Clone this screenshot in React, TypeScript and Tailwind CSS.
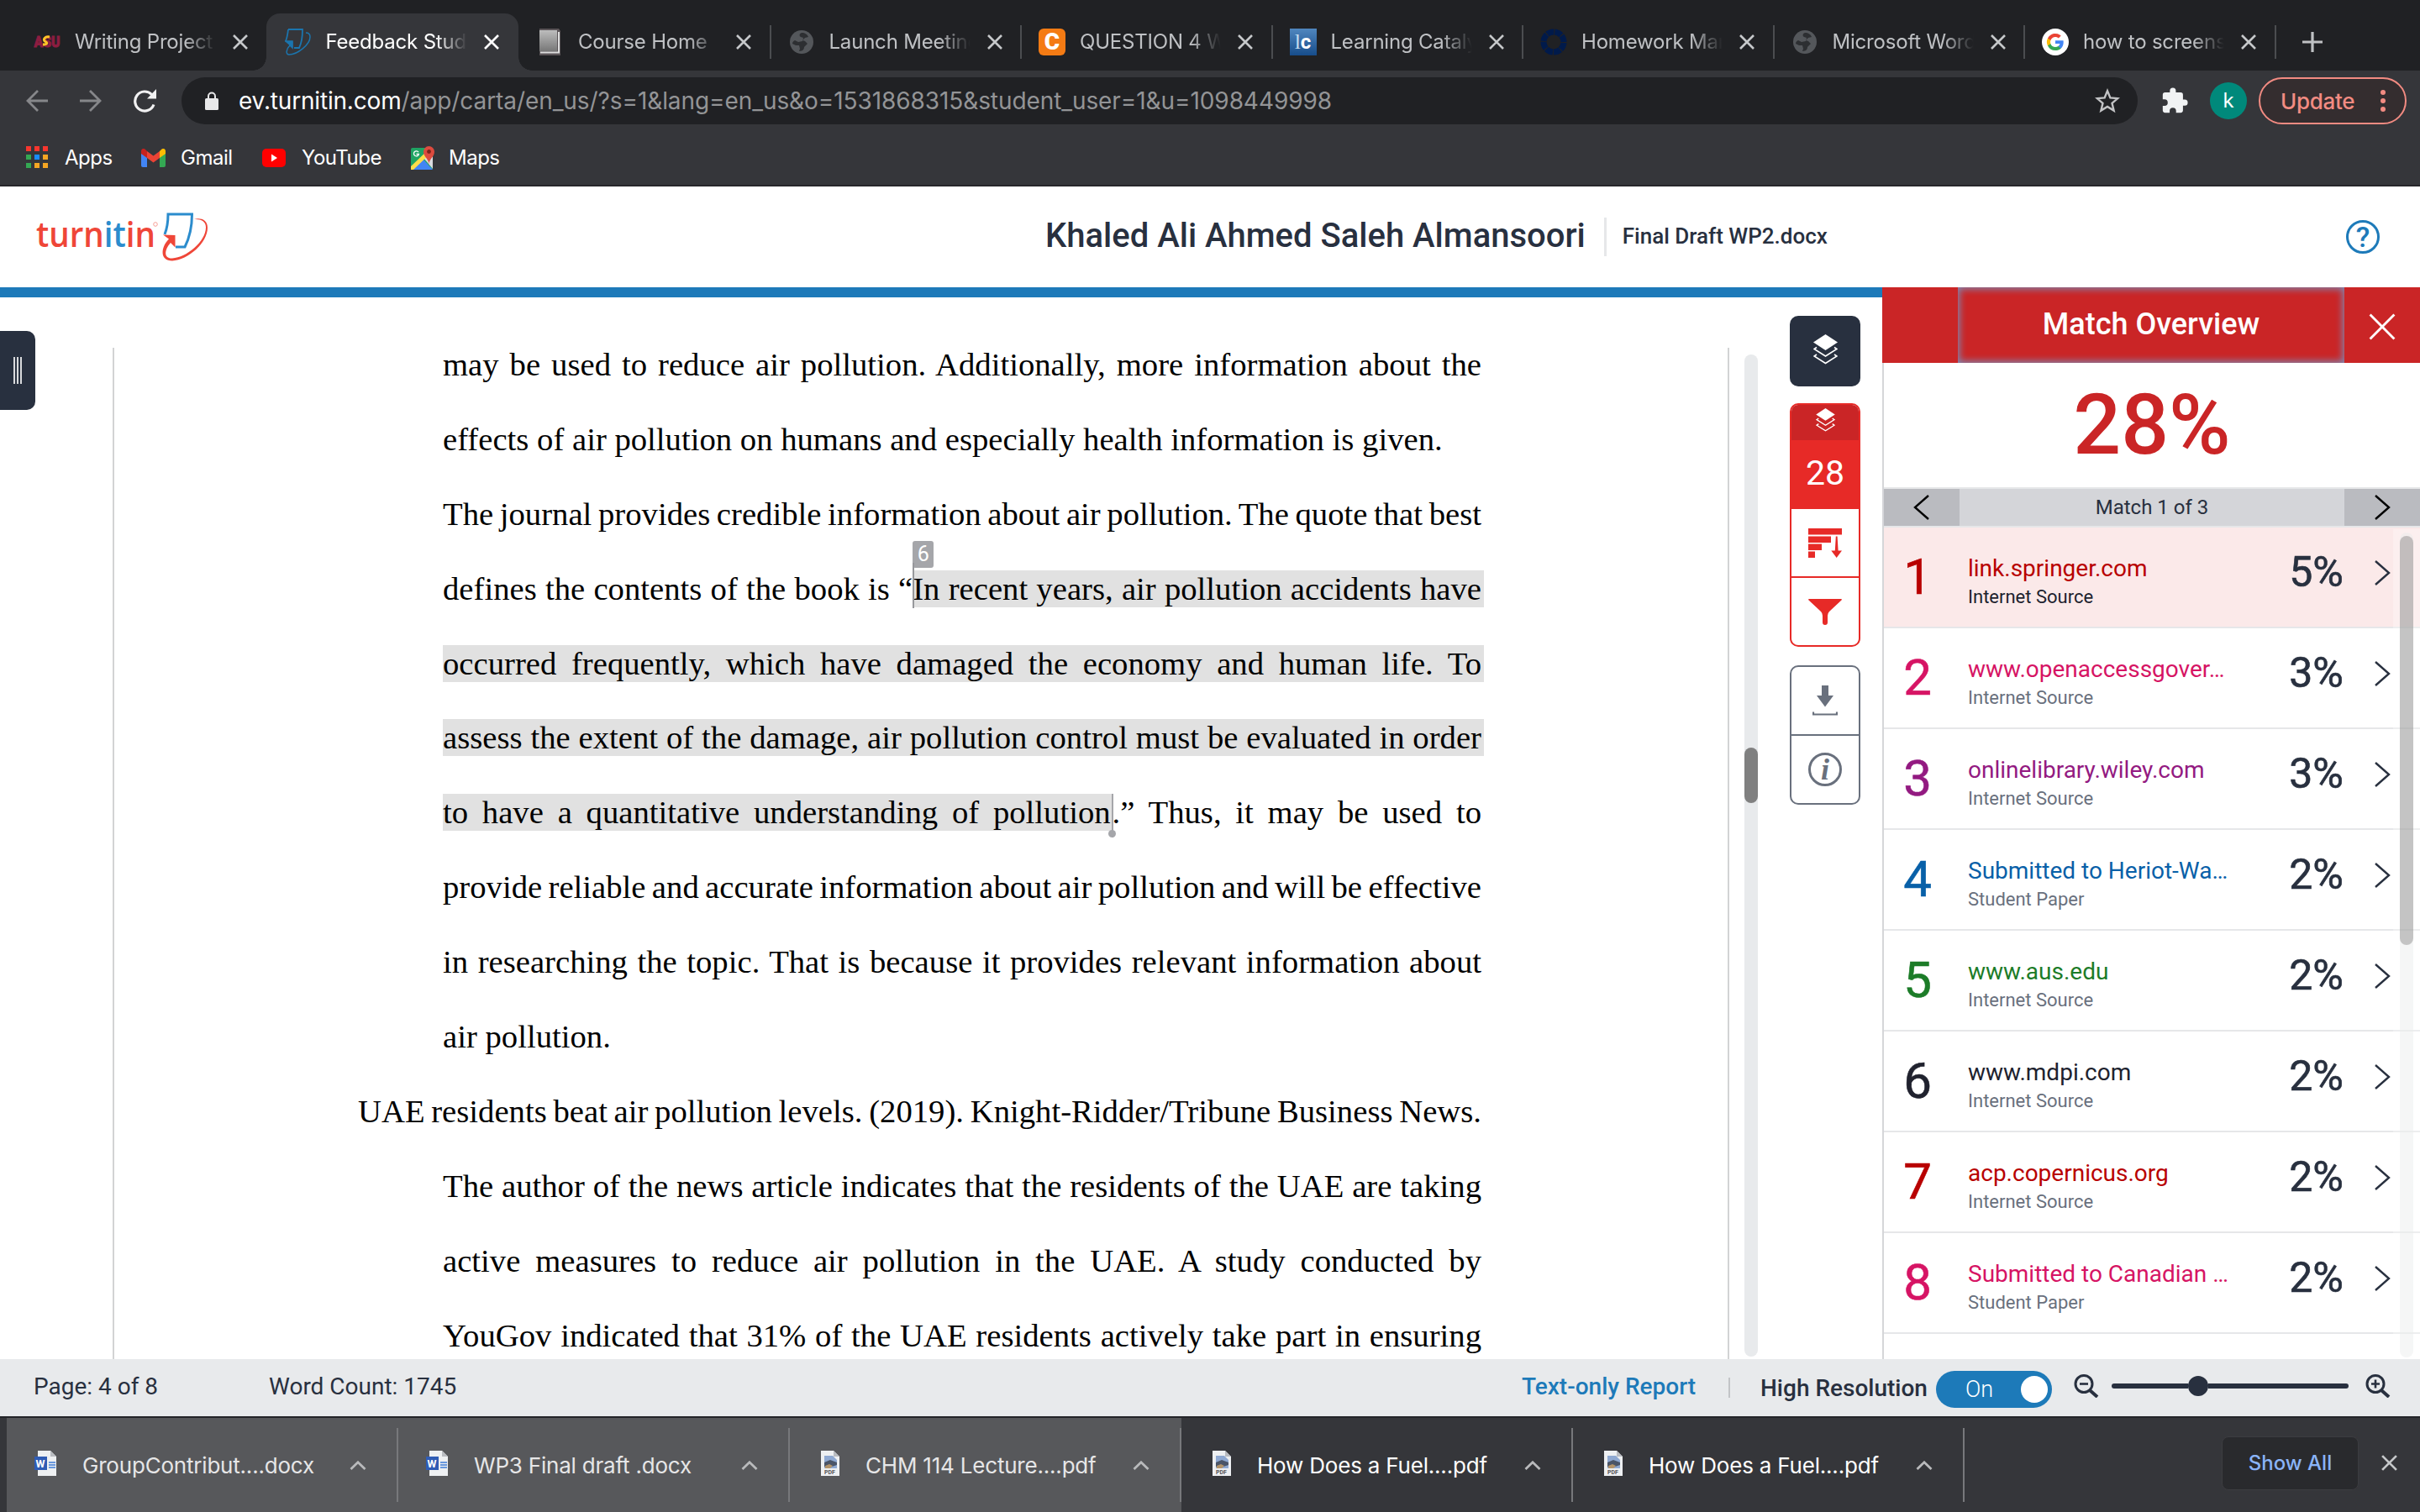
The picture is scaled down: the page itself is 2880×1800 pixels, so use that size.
import type { ReactNode } from "react";
import clsx from "clsx";

type TabItem = { title: string; icon: ReactNode; active?: boolean };

function Globe() {
  return (
    <svg viewBox="0 0 28 28" className="mx-0.5 size-7">
      <circle cx="14" cy="14" r="14" fill="#54575b" />
      <path
        d="M14 3c-3 1-3 4-1 5l3 1-1 4-5 1-4-2c-2 1-3 2-3 4l4 2 4 0 1 4-1 3c5 0 6-3 6-5l4-4-3-3-3-1 3-3 4-1c-1-3-4-5-8-5z"
        fill="#2d2f32"
      />
    </svg>
  );
}

function GoogleG() {
  return (
    <svg viewBox="0 0 32 32" className="size-8">
      <circle cx="16" cy="16" r="16" fill="#fff" />
      <g transform="translate(5 5) scale(.917)">
        <path fill="#4285F4" d="M22.56 12.25c0-.78-.07-1.53-.2-2.25H12v4.26h5.92a5.06 5.06 0 0 1-2.2 3.32v2.77h3.57c2.08-1.92 3.27-4.74 3.27-8.1z" />
        <path fill="#34A853" d="M12 23c2.97 0 5.46-.98 7.28-2.66l-3.57-2.77c-.98.66-2.23 1.06-3.71 1.06-2.86 0-5.29-1.93-6.16-4.53H2.18v2.84A11 11 0 0 0 12 23z" />
        <path fill="#FBBC05" d="M5.84 14.09a6.6 6.6 0 0 1 0-4.18V7.07H2.18a11 11 0 0 0 0 9.86l3.66-2.84z" />
        <path fill="#EA4335" d="M12 5.38c1.62 0 3.06.56 4.21 1.64l3.15-3.15A11 11 0 0 0 2.18 7.07l3.66 2.84C6.71 7.3 9.14 5.38 12 5.38z" />
      </g>
    </svg>
  );
}

const tabs: TabItem[] = [
  {
    title: "Writing Project 2",
    icon: (
      <svg viewBox="0 0 32 32" className="size-8">
        <text x="0.5" y="22" fontSize="19" fontWeight="900" fontFamily="Roboto" fill="#8c1d40" stroke="#8c1d40" strokeWidth="1" textLength="31" lengthAdjust="spacingAndGlyphs">
          ASU
        </text>
        <path d="M19 10c-5-1-9 3-5 5.500 3 1.500 2 3.500-3 3.500" fill="none" stroke="#ffc627" strokeWidth="3" />
      </svg>
    ),
  },
  {
    title: "Feedback Studio",
    active: true,
    icon: (
      <svg viewBox="0 0 32 32" className="size-8" fill="none" stroke="#1b75ae">
        <path d="M4 1h17q0 14-4 22h-6M4 1q-1 9-3 14" strokeWidth="1.800" />
        <path d="M0 15h9v8l-3-3C1 25 1 31 5 31c10 0 25-12 25-21 0-4-2-5-5-5" strokeWidth="1.500" />
        <path d="M1 15.500h8v7z" fill="#1b75ae" />
      </svg>
    ),
  },
  {
    title: "Course Home",
    icon: (
      <svg viewBox="0 0 32 32" className="size-8">
        <defs>
          <linearGradient id="book" x2="0" y2="1">
            <stop stopColor="#bdbdbd" />
            <stop offset="1" stopColor="#777" />
          </linearGradient>
        </defs>
        <path d="M3 0h23l2 3v29H3z" fill="#5b5558" />
        <path d="M3 2h21v25H3z" fill="url(#book)" />
        <path d="M4 28.500h22V4" fill="none" stroke="#ddd" strokeWidth="2" />
      </svg>
    ),
  },
  { title: "Launch Meeting - Zoom", icon: <Globe /> },
  {
    title: "QUESTION 4 WP",
    icon: (
      <div className="flex size-8 items-center justify-center rounded-md bg-[#f47b14] font-[Roboto] text-[28px] leading-none font-black text-white">C</div>
    ),
  },
  {
    title: "Learning Catalytics",
    icon: (
      <div className="flex size-8 items-center justify-center bg-linear-to-b from-[#5087bf] to-[#164d8b] font-['Liberation_Serif'] text-[26px] leading-none text-[#c5dcf0]">
        l<b className="font-[Roboto] text-[24px] text-white">c</b>
      </div>
    ),
  },
  {
    title: "Homework Manager",
    icon: (
      <svg viewBox="0 0 32 32" className="size-8" fill="none" stroke="#001a4b">
        <circle cx="16" cy="16" r="12" strokeWidth="7" />
        <circle cx="16" cy="16" r="12" strokeWidth="8" stroke="#202124" strokeDasharray="1 8.425" />
      </svg>
    ),
  },
  { title: "Microsoft Word - Final", icon: <Globe /> },
  { title: "how to screenshot on", icon: <GoogleG /> },
];

const matches = [
  { name: "link.springer.com", kind: "Internet Source", percent: "5%", color: "text-[#b80000]" },
  { name: "www.openaccessgover…", kind: "Internet Source", percent: "3%", color: "text-[#d61464]" },
  { name: "onlinelibrary.wiley.com", kind: "Internet Source", percent: "3%", color: "text-[#931a81]" },
  { name: "Submitted to Heriot-Wa…", kind: "Student Paper", percent: "2%", color: "text-[#0860a8]" },
  { name: "www.aus.edu", kind: "Internet Source", percent: "2%", color: "text-[#1c7c28]" },
  { name: "www.mdpi.com", kind: "Internet Source", percent: "2%", color: "text-[#20222e]" },
  { name: "acp.copernicus.org", kind: "Internet Source", percent: "2%", color: "text-[#b80000]" },
  { name: "Submitted to Canadian …", kind: "Student Paper", percent: "2%", color: "text-[#d61464]" },
];

const downloads = [
  { name: "GroupContribut....docx", type: "word", dim: true },
  { name: "WP3 Final draft .docx", type: "word", dim: true },
  { name: "CHM 114 Lecture....pdf", type: "pdf", dim: true },
  { name: "How Does a Fuel....pdf", type: "pdf", dim: false },
  { name: "How Does a Fuel....pdf", type: "pdf", dim: false },
];

function Cross({ className }: { className: string }) {
  return (
    <svg viewBox="0 0 20 20" className={className} fill="none" stroke="currentColor">
      <path d="M2 2l16 16M18 2L2 18" />
    </svg>
  );
}

function Chevron({ className, left }: { className?: string; left?: boolean }) {
  return (
    <svg viewBox="0 0 20 32" className={clsx("h-8 w-5 shrink-0", className)} fill="none" stroke="currentColor" strokeWidth="2.400">
      <path d={left ? "M18 2L2 16l16 14" : "M2 2l16 14L2 30"} />
    </svg>
  );
}

function Tab({ title, icon, active, separator }: TabItem & { separator: boolean }) {
  return (
    <div className={clsx("relative flex h-[68px] w-[298.5px] shrink-0 items-center pl-[20px]", active && "mr-0.5")}>
      {active && (
        <div className="absolute inset-y-0 right-0 -left-[2px] rounded-t-2xl bg-[#35363a]">
          <div className="absolute bottom-0 -left-4 size-4 bg-[radial-gradient(circle_at_0_0,#202124_15.5px,#35363a_16px)]" />
          <div className="absolute -right-4 bottom-0 size-4 bg-[radial-gradient(circle_at_100%_0,#202124_15.5px,#35363a_16px)]" />
        </div>
      )}
      <div className="relative size-8 shrink-0">
        <div className="flex size-8 items-center">{icon}</div>
      </div>
      <div
        className={clsx(
          "relative ml-[17px] w-[168px] overflow-hidden mask-[linear-gradient(to_right,#000_78%,transparent)] text-[24px] tracking-[-0.2px] whitespace-nowrap",
          active ? "text-white" : "text-[#bfc1c4]",
        )}
      >
        {title}
      </div>
      <Cross className={clsx("relative ml-[19px] size-5 shrink-0 stroke-[2.6]", active ? "text-white" : "text-[#c6c8ca]")} />
      {separator && <div className="ml-auto h-10 w-0.5 bg-[#4b4d50]" />}
    </div>
  );
}

function Browser() {
  return (
    <div className="h-[222px] border-b-2 border-[#27262a] bg-[#35363a] font-[Inter,sans-serif]">
      <div className="flex h-[84px] bg-[#202124] pt-4 pl-5">
        {tabs.map((tab, i) => (
          <Tab key={tab.title} {...tab} separator={i > 1} />
        ))}
        <svg viewBox="0 0 24 24" className="mt-[22px] ml-[31px] size-6" stroke="#bfc1c4" strokeWidth="3.200">
          <path d="M12 0v24M0 12h24" />
        </svg>
      </div>

      <div className="flex h-[72px] items-center pl-[31px]">
        <svg viewBox="0 0 26 26" className="h-[26px] w-[26px]" fill="none" stroke="#86878a" strokeWidth="2.800">
          <path d="M14 1L2 13l12 12M2 13h24" />
        </svg>
        <svg viewBox="0 0 26 26" className="ml-[38px] h-[26px] w-[26px]" fill="none" stroke="#86878a" strokeWidth="2.800">
          <path d="M12 1l12 12-12 12M24 13H0" />
        </svg>
        <svg viewBox="0 0 28 28" className="ml-[37px] size-7" fill="none">
          <path d="M22.500 6.500a11.500 11.500 0 1 0 2.500 12" stroke="#f1f1f2" strokeWidth="3.200" />
          <path d="M28 0v11.500H17z" fill="#f1f1f2" />
        </svg>
        <div className="ml-[30px] flex h-14 w-[2328px] items-center rounded-full bg-[#202124] pl-[28px] text-[28px]">
          <svg viewBox="0 0 16 22" className="h-[22px] w-4" fill="none">
            <rect y="8" width="16" height="14" rx="1.500" fill="#e8e8e9" />
            <path d="M4 9V5.500a4 4 0 0 1 8 0V9" stroke="#e8e8e9" strokeWidth="2" />
          </svg>
          <div className="ml-[24px] whitespace-nowrap">
            <span className="tracking-[-0.18px] text-white">ev.turnitin.com</span>
            <span className="tracking-[-0.08px] text-[#939496]">
              /app/carta/en_us/?s=1&amp;lang=en_us&amp;o=1531868315&amp;student_user=1&amp;u=1098449998
            </span>
          </div>
          <svg viewBox="0 0 24 24" className="mr-[21px] ml-auto size-[30px]" fill="none" stroke="#c3c4c6" strokeWidth="1.900">
            <path d="M12 2.500l2.700 6.600 7.100.6-5.400 4.600 1.700 7L12 17.500l-6.100 3.800 1.700-7-5.400-4.600 7.100-.6z" />
          </svg>
        </div>
        <svg viewBox="0 0 24 24" className="ml-[27px] size-[34px] fill-[#f1f3f4]">
          <path d="M20.500 11H19V7a2 2 0 0 0-2-2h-4V3.500a2.500 2.500 0 0 0-5 0V5H4a2 2 0 0 0-2 2v3.800h1.500a2.700 2.700 0 0 1 0 5.400H2V20a2 2 0 0 0 2 2h3.800v-1.500a2.700 2.700 0 0 1 5.400 0V22H17a2 2 0 0 0 2-2v-4h1.500a2.500 2.500 0 0 0 0-5z" />
        </svg>
        <div className="ml-[25px] flex size-11 items-center justify-center rounded-full bg-[#00897b] text-[24px] text-white">k</div>
        <div className="ml-[14px] flex h-14 w-[176px] items-center rounded-full border-2 border-[#f28b82] bg-[#342d2f] pl-[24px] text-[26px] font-medium tracking-[-0.3px] text-[#f28b82]">
          Update
          <div className="ml-[31px] flex flex-col gap-1">
            <i className="size-1.5 rounded-full bg-[#f28b82]" />
            <i className="size-1.5 rounded-full bg-[#f28b82]" />
            <i className="size-1.5 rounded-full bg-[#f28b82]" />
          </div>
        </div>
      </div>

      <div className="flex h-[63px] items-center pl-[31px] text-[24px] tracking-[-0.5px] text-white">
        <div className="flex w-[137px] items-center gap-5">
          <svg viewBox="0 0 26 27" className="h-[27px] w-[26px]">
            <path d="M0 0h6v6H0zM10 0h6v6h-6zM20 0h6v6h-6z" fill="#f7362e" />
            <path d="M0 10h6v6H0zM0 20h6v6H0z" fill="#34a853" />
            <path d="M10 10h6v6h-6z" fill="#1a8cff" />
            <path d="M20 10h6v6h-6zM10 20h6v6h-6zM20 20h6v6h-6z" fill="#f5a623" />
          </svg>
          Apps
        </div>
        <div className="flex w-[144px] items-center gap-[18px]">
          <svg viewBox="0 0 29 22" className="h-[22px] w-[29px]">
            <path d="M0 5v15a2 2 0 0 0 2 2h5V9z" fill="#4285f4" />
            <path d="M29 5v15a2 2 0 0 1-2 2h-5V9z" fill="#34a853" />
            <path d="M22 3v8l7-5V3c0-3-3-4-5-2z" fill="#fbbc04" />
            <path d="M0 6l7 5V3L5 1C3-1 0 0 0 3z" fill="#c5221f" />
            <path d="M7 3l7.500 5.500L22 3v8l-7.500 5.500L7 11z" fill="#ea4335" />
          </svg>
          Gmail
        </div>
        <div className="flex w-[177px] items-center gap-[19px]">
          <svg viewBox="0 0 28 22" className="h-[22px] w-7">
            <rect width="28" height="22" rx="5" fill="#f00" />
            <path d="M11 6.500v9l7-4.500z" fill="#fff" />
          </svg>
          YouTube
        </div>
        <div className="flex items-center gap-[17px]">
          <svg viewBox="0 0 28 28" className="size-7">
            <rect y="2" width="26" height="26" rx="2" fill="#1fa463" />
            <path d="M2 28L14 15l12 13z" fill="#4285f4" />
            <path d="M15 14l11-6v19z" fill="#dadce0" />
            <path d="M0 24L20 5l4 3L3 28H0z" fill="#ffdd4b" />
            <path d="M21.500 22c0-7-6.500-9-6.500-15.500a6.500 6.500 0 0 1 13 0C28 13 21.500 15 21.500 22z" fill="#dd4b3e" />
            <circle cx="21.500" cy="6.500" r="2.400" fill="#7c231b" />
            <path d="M9 7.200a3 3 0 1 0 .4 2.300H6.500" fill="none" stroke="#fff" strokeWidth="1.300" />
          </svg>
          Maps
        </div>
      </div>
    </div>
  );
}

function TurnitinLogo() {
  return (
    <svg viewBox="0 0 206 62" className="h-[62px] w-[206px]">
      <text x="0" y="43" fontFamily="Open Sans" fontSize="42" fontWeight="600" fill="#ef4638" textLength="142" lengthAdjust="spacingAndGlyphs">
        turn<tspan fill="#2b8ccd">it</tspan>in
      </text>
      <circle cx="142" cy="16" r="2.300" fill="none" stroke="#f4897f" strokeWidth=".8" />
      <g fill="none">
        <path d="M153 28q4-10 4-24h28.500q0 22-8.500 39h-11" stroke="#2b8ccd" strokeWidth="3" />
        <path
          d="M151 28.500l14.500.5v14.500l-5.500-5.500c-8 9-8 19 2 18.500 17-1 40-20 40-37 0-7-6-10-14-9.500 7-2 16 0 16 10 0 18-23 38.500-42 39.500-15 0-14-16-4-26z"
          fill="#ef4638"
        />
      </g>
    </svg>
  );
}

function Header() {
  return (
    <header className="flex h-[120px] items-center bg-white pl-[43px] text-[#28303f]">
      <TurnitinLogo />
      <h1 className="ml-[995px] pb-[3px] text-[40px] font-medium whitespace-nowrap">Khaled Ali Ahmed Saleh Almansoori</h1>
      <div className="ml-[22px] h-[46px] w-[3px] bg-[#e6e7e9]" />
      <div className="ml-[19px] pb-0.5 text-[26px] font-medium whitespace-nowrap">Final Draft WP2.docx</div>
      <div className="mr-12 ml-auto flex size-10 items-center justify-center rounded-full border-[3px] border-[#1d7ab9] text-[34px] font-medium text-[#1d7ab9]">
        ?
      </div>
    </header>
  );
}

const mark = "bg-[#e1e1e1] py-px";

type LineProps = { children: ReactNode; ragged?: boolean; hanging?: boolean; tight?: boolean };

function Line({ children, ragged, hanging, tight }: LineProps) {
  return (
    <div
      className={clsx(
        "h-[88.9px] leading-[88.9px] whitespace-nowrap",
        !ragged && "[text-align-last:justify]",
        hanging && "-ml-[101px]",
        tight && "[word-spacing:-3px]",
      )}
    >
      {children}
    </div>
  );
}

function Paper() {
  return (
    <div className="mt-[60px] w-[1924px] border-x-2 border-[#d2d3d4]">
      <article className="-mt-[24px] ml-[391px] w-[1236px] font-['Liberation_Serif',serif] text-[38.7px] text-black">
        <Line>may be used to reduce air pollution. Additionally, more information about the</Line>
        <Line ragged>effects of air pollution on humans and especially health information is given.</Line>
        <Line tight>The journal provides credible information about air pollution. The quote that best</Line>
        <Line>
          defines the contents of the book is “
          <span className={clsx(mark, "relative -mr-[3px] pr-[3px]")}>
            <span className="absolute -top-[35px] left-0 flex h-8 w-[25px] items-center justify-center rounded-[3px] bg-[#a5a6aa] font-[Roboto] text-[25px] leading-none text-white [text-align-last:center]">
              6
            </span>
            <span className="absolute -top-[9px] left-0 h-[54px] w-0.5 bg-[#97989c]" />
            In recent years, air pollution accidents have
          </span>
        </Line>
        <Line>
          <span className={clsx(mark, "-mr-[3px] pr-[3px]")}>occurred frequently, which have damaged the economy and human life. To</span>
        </Line>
        <Line>
          <span className={clsx(mark, "-mr-[3px] pr-[3px]")}>assess the extent of the damage, air pollution control must be evaluated in order</span>
        </Line>
        <Line>
          <span className={clsx(mark, "relative pr-0.5")}>
            to have a quantitative understanding of pollution
            <span className="absolute top-0 -right-px h-[52px] w-0.5 bg-[#a5a6aa]" />
            <span className="absolute top-[43px] -right-1 size-[9px] rounded-full bg-[#a5a6aa]" />
          </span>
          .” Thus, it may be used to
        </Line>
        <Line tight>provide reliable and accurate information about air pollution and will be effective</Line>
        <Line>in researching the topic. That is because it provides relevant information about</Line>
        <Line ragged>air pollution.</Line>
        <Line hanging tight>
          UAE residents beat air pollution levels. (2019). Knight-Ridder/Tribune Business News.
        </Line>
        <Line>The author of the news article indicates that the residents of the UAE are taking</Line>
        <Line>active measures to reduce air pollution in the UAE. A study conducted by</Line>
        <Line>YouGov indicated that 31% of the UAE residents actively take part in ensuring</Line>
      </article>
    </div>
  );
}

function Layers({ className }: { className: string }) {
  return (
    <svg viewBox="0 0 29 36" className={className} fill="none">
      <path d="M14.500 0L29 9.500l-14.500 9.500L0 9.500z" fill="#fff" />
      <path d="M4 15.500l-3 2 13.500 8.500L28 17.500l-3-2M4 24l-3 2 13.500 8.500L28 26l-3-2" stroke="#fff" strokeWidth="1.700" />
    </svg>
  );
}

function Tools() {
  return (
    <div className="mt-[22px] ml-[38px] w-[84px]">
      <div className="flex h-[84px] items-center justify-center rounded-[10px] bg-[#28303f]">
        <Layers className="mb-1 h-9 w-[29px]" />
      </div>
      <div className="mt-5 h-[290px] overflow-hidden rounded-[10px] border-2 border-[#e72a27]">
        <div className="-mx-0.5 -mt-0.5 flex h-11 items-center justify-center bg-[#ca2526]">
          <Layers className="mb-1 h-7 w-[23px]" />
        </div>
        <div className="flex h-[82px] items-center justify-center bg-[#e72a27] pb-0.5 text-[41px] text-white">28</div>
        <div className="flex h-[82px] items-center justify-center border-b-2 border-[#e72a27]">
          <svg viewBox="0 0 40 35" className="h-[35px] w-10" fill="#e72a27">
            <path d="M0 0h40v7.500H0zM0 9.500h27v7.500H0zM0 18.500h16V26H0zM0 27.500h8V35H0zM32.800 9.500h1.800l1 17H40L33.700 35l-6.400-8.500h4.500z" />
          </svg>
        </div>
        <div className="flex h-20 items-center justify-center">
          <svg viewBox="0 0 40 31" className="h-[31px] w-10" fill="#e72a27">
            <path d="M1 0h38q1.500 0 .5 1.500L25 15q-2 2-2 5v8q0 3-3 3t-3-3v-8q0-3-2-5L.5 1.500Q-.5 0 1 0z" />
          </svg>
        </div>
      </div>
      <div className="mt-[22px] h-[166px] rounded-[10px] border-2 border-[#69707d]">
        <div className="flex h-[82px] items-center justify-center border-b-2 border-[#69707d]">
          <svg viewBox="0 0 30 36" className="h-9 w-[30px]" fill="#69707d">
            <path d="M11 0h8v12h6L15 25.500 5 12h6z" />
            <path d="M1 31.500v3h28v-3" fill="none" stroke="#69707d" strokeWidth="2.200" />
          </svg>
        </div>
        <div className="flex h-20 items-center justify-center">
          <div className="flex size-10 items-center justify-center rounded-full border-[3px] border-[#69707d] font-['Liberation_Serif'] text-[36px] leading-none font-bold text-[#69707d] italic">
            i
          </div>
        </div>
      </div>
    </div>
  );
}

function Viewer() {
  return (
    <div className="w-[2240px] border-t-12 border-[#1d7ab9] bg-white">
      <div className="flex h-[1264px]">
        <div className="w-[134px] shrink-0 pt-10">
          <div className="flex h-[94px] w-[42px] items-center justify-end gap-0.5 rounded-r-[10px] bg-[#28303f] pr-4">
            <i className="h-8 w-0.5 bg-[#d8d9dc]" />
            <i className="h-8 w-0.5 bg-[#d8d9dc]" />
            <i className="h-8 w-0.5 bg-[#d8d9dc]" />
          </div>
        </div>
        <Paper />
        <div className="mt-[68px] ml-[18px] h-[1193px] w-4 rounded-full bg-[#e8eaec] pt-[468px]">
          <div className="h-[66px] rounded-full bg-[#808080]" />
        </div>
        <Tools />
      </div>
    </div>
  );
}

function MatchOverview() {
  return (
    <aside className="relative h-[1276px] w-[640px] overflow-hidden bg-white text-[#28303f]">
      <div className="flex h-[90px] bg-[#ca2526] text-white">
        <div className="w-[90px]" />
        <h2 className="flex w-[460px] items-center justify-center pb-0.5 text-[36px] font-medium shadow-[inset_0_0_8px_2px_#7d8ab5]">
          Match Overview
        </h2>
        <div className="flex w-[90px] items-center justify-center pt-1">
          <Cross className="size-9 stroke-[1.6]" />
        </div>
      </div>
      <div className="h-[1186px] border-l-2 border-[#d5d6d9]">
        <div className="flex h-[150px] items-center justify-center border-b-2 border-[#e6e7e9] text-[100px] font-medium text-[#ca2526]">
          28%
        </div>
        <div className="flex h-[46px] border-b-2 border-[#e6e7e9] bg-[#d4d5d9] text-[24px] text-black">
          <div className="flex w-[90px] items-center justify-center bg-[#babbc0]">
            <Chevron left />
          </div>
          <div className="flex w-[458px] items-center justify-center text-[#28303f]">Match 1 of 3</div>
          <div className="flex w-[90px] items-center justify-center bg-[#babbc0]">
            <Chevron />
          </div>
        </div>
        {matches.map((match, i) => (
          <div key={match.name} className={clsx("flex h-[120px] border-b-2 border-[#e6e7e9]", i === 0 && "bg-[#fbe9e9]")}>
            <div className={clsx("w-[80px] text-center text-[60px] leading-[117px] [-webkit-text-stroke:0.6px]", match.color)}>{i + 1}</div>
            <div className="ml-5 w-[350px] pt-[31px]">
              <div className={clsx("text-[28px] leading-9 whitespace-nowrap", match.color)}>{match.name}</div>
              <div className={clsx("text-[22px] leading-8", i === 0 ? "text-[#20222e]" : "text-[#69707d]")}>{match.kind}</div>
            </div>
            <div className="w-[97px] text-right text-[50px] leading-[106px] [-webkit-text-stroke:0.6px]">{match.percent}</div>
            <Chevron className="mt-[38px] ml-[36px]" />
          </div>
        ))}
      </div>
      {/* scrollbar floats over the list */}
      <div className="absolute top-[288px] right-0 h-[988px] w-8 bg-white/30">
        <div className="mt-1 ml-2 h-[982px] w-4 rounded-full bg-[#e9ebea]/45 pt-1">
          <div className="h-[487px] rounded-full bg-black/20" />
        </div>
      </div>
    </aside>
  );
}

function Zoom({ plus }: { plus?: boolean }) {
  return (
    <svg viewBox="0 0 30 28" className="h-7 w-[30px]" fill="none" stroke="#28303f" strokeWidth="3">
      <circle cx="12" cy="11.500" r="10" />
      <path d="M19 19l9 8" strokeWidth="4" />
      <path d={plus ? "M7 11.500h10M12 6.500v10" : "M7 11.500h10"} strokeWidth="2.600" />
    </svg>
  );
}

function StatusBar() {
  return (
    <div className="flex h-[68px] items-center bg-[#e8eaec] pl-10 text-[28px] text-[#28303f]">
      <div className="w-[280px] pb-[3px]">Page: 4 of 8</div>
      <div className="w-[1491px] pb-[3px]">Word Count: 1745</div>
      <div className="w-[246px] pb-[3px] font-medium text-[#1d7ab9]">Text-only Report</div>
      <div className="h-6 w-0.5 bg-[#c2c4c7]" />
      <div className="ml-[36px] pt-px font-medium">High Resolution</div>
      <div className="mt-1 ml-[10px] flex h-11 w-[138px] items-center rounded-full bg-[#1d7ab9] pl-[35px] text-[27px] font-light text-white">
        On
        <div className="mr-[5px] ml-auto size-8 rounded-full bg-white" />
      </div>
      <div className="ml-[26px] flex items-center pb-1">
        <Zoom />
        <div className="ml-[15px] flex h-6 w-[282px] items-center">
          <div className="h-1.5 w-[91px] rounded-l-full bg-[#28303f]" />
          <div className="size-6 rounded-full bg-[#28303f]" />
          <div className="h-1.5 flex-1 rounded-r-full bg-[#28303f]" />
        </div>
        <div className="ml-5">
          <Zoom plus />
        </div>
      </div>
    </div>
  );
}

function FileIcon({ type }: { type: string }) {
  return (
    <svg viewBox="0 0 28 30" className="mb-1 h-[30px] w-7">
      <path d="M4 0h15l7 7v23H4z" fill="#eef0f2" />
      <path d="M19 0l7 7h-7z" fill="#b9bcc1" />
      {type === "word" ? (
        <>
          <path d="M17 14h8M17 17h8M17 20h8" stroke="#3e7bd6" strokeWidth="1.300" />
          <rect y="7" width="15" height="16" fill="#2f5cb5" />
          <text x="1.500" y="19.500" fontSize="12.500" fontWeight="700" fontFamily="Roboto" fill="#fff">
            W
          </text>
        </>
      ) : (
        <>
          <path d="M8 6h10l5 5v10H8z" fill="#8fa9d2" />
          <path d="M8 14l7-3 8 3v3l-9 3-6-1z" fill="#4a5568" />
          <path d="M9 18l5-2 4 2-3 3H9z" fill="#b3946a" />
          <text x="8" y="28" fontSize="7" fontWeight="700" fontFamily="Roboto" fill="#555">
            PDF
          </text>
        </>
      )}
    </svg>
  );
}

function DownloadShelf() {
  return (
    <div className="flex h-[114px] border-t-2 border-[#232428] bg-[#35363a] pl-2 font-[Inter,sans-serif]">
      {downloads.map((file, i) => (
        <div key={i} className={clsx("flex w-[466px] items-center pl-[33px]", file.dim ? "bg-[#57585b] text-[#e6e6e7]" : "text-white")}>
          <FileIcon type={file.type} />
          <div className="ml-[29px] text-[26px] tracking-[-0.2px] whitespace-nowrap">{file.name}</div>
          <svg viewBox="0 0 20 11" className="mr-[36px] ml-auto h-[11px] w-5" fill="none" stroke="#b9babc" strokeWidth="2.800">
            <path d="M1.500 10L10 1.800l8.500 8.200" />
          </svg>
          <div className="h-[88px] w-0.5 bg-[#77787b]" />
        </div>
      ))}
      <div className="mt-[22px] ml-[306px] flex h-16 w-[163px] items-center justify-center rounded-lg border border-[#3c3d41] bg-[#292a2d] text-[24px] font-medium text-[#8ab4f8]">
        Show All
      </div>
      <Cross className="mt-[43px] ml-[26px] size-[21px] stroke-[2.6] text-[#c6c8ca]" />
    </div>
  );
}

export default function App() {
  return (
    <div className="h-[1800px] w-[2880px] overflow-hidden bg-white font-[Roboto,sans-serif]">
      <Browser />
      <Header />
      <div className="flex h-[1276px] overflow-hidden">
        <Viewer />
        <MatchOverview />
      </div>
      <StatusBar />
      <DownloadShelf />
    </div>
  );
}
